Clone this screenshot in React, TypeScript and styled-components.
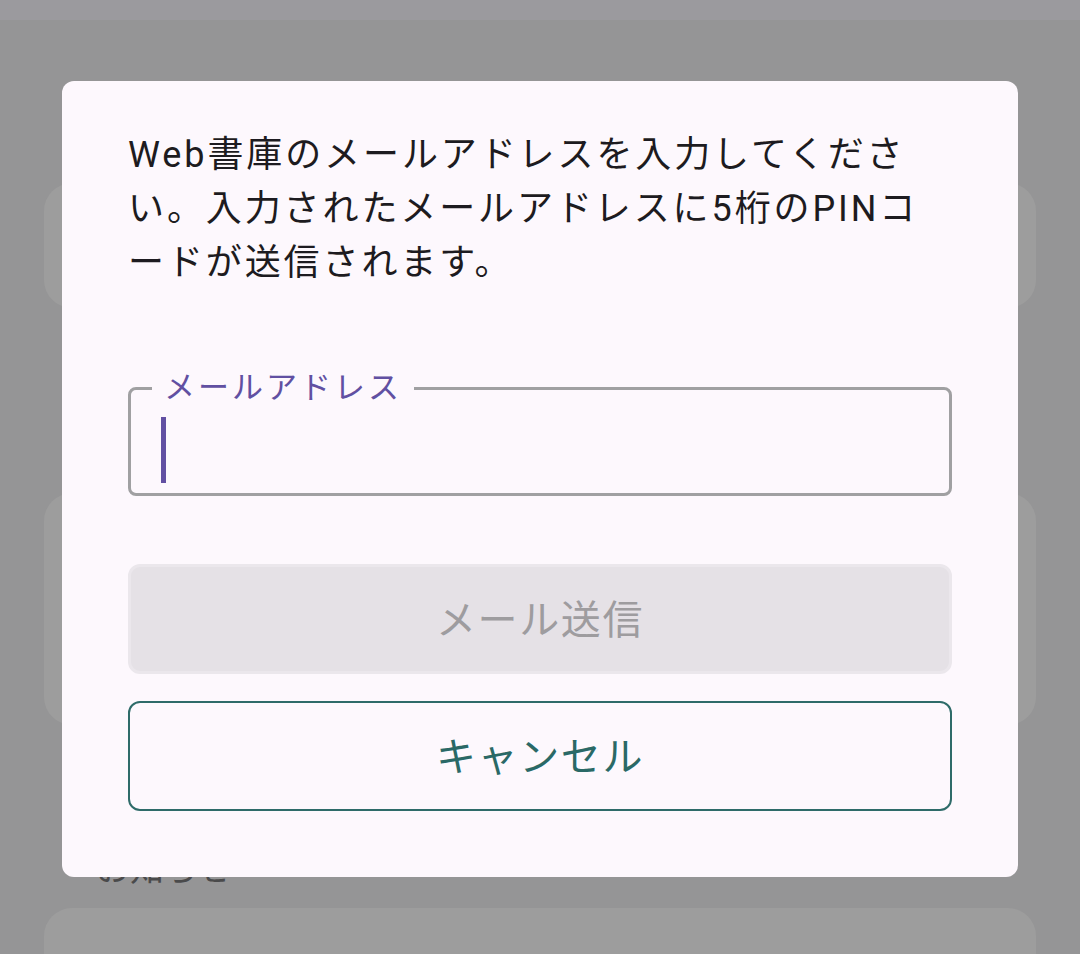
import React from "react";
import styled, { createGlobalStyle } from "styled-components";

const GlobalStyle = createGlobalStyle`
  html, body {
    margin: 0;
    padding: 0;
    height: 954px;
    overflow: hidden;
    background: #959596;
    font-family: Roboto, "Noto Sans CJK JP", sans-serif;
  }
  #root { height: 954px; }
`;

const Screen = styled.div`
  position: relative;
  width: 1080px;
  height: 954px;
  overflow: hidden;
  background: #959596;
`;

const StatusBar = styled.div`
  height: 20px;
  background: #9b9a9e;
`;

const Content = styled.div`
  display: flex;
  flex-direction: column;
  padding: 0 44px;
`;

const Card = styled.div<{ $top: number; $height: number }>`
  margin-top: ${(p) => p.$top}px;
  height: ${(p) => p.$height}px;
  border-radius: 28px;
  background: #9d9d9d;
`;

const SectionTitle = styled.div`
  margin-top: 124px;
  padding-left: 52px;
  font-size: 34px;
  line-height: 40px;
  color: #4a4a4b;
`;

const Overlay = styled.div`
  position: absolute;
  inset: 0;
  display: flex;
  justify-content: center;
  align-items: flex-start;
  padding-top: 81px;
`;

const Dialog = styled.div`
  width: 956px;
  box-sizing: border-box;
  padding: 47px 66px 66px;
  border-radius: 12px;
  background: #fdf8fd;
  display: flex;
  flex-direction: column;
`;

const Message = styled.p`
  margin: 0;
  font-size: 36px;
  line-height: 54px;
  letter-spacing: 2.9px;
  color: #1d1b20;
  white-space: nowrap;
`;

const Field = styled.fieldset`
  margin: 81px 0 0;
  padding: 0;
  min-width: 0;
  border: 3px solid #a0a0a2;
  border-radius: 8px;
`;

const FieldLabel = styled.legend`
  margin-left: 21px;
  padding: 0 12px;
  font-size: 31px;
  line-height: 34px;
  letter-spacing: 3px;
  color: #6150a2;
`;

const FieldBody = styled.div`
  padding: 12px 30px 10px;
  display: flex;
  align-items: center;
`;

const Caret = styled.div`
  width: 5px;
  height: 66px;
  background: #6250a3;
`;

const Button = styled.button<{ $variant: "disabled" | "outlined"; $top: number }>`
  margin-top: ${(p) => p.$top}px;
  height: 110px;
  width: 100%;
  box-sizing: border-box;
  border-radius: 12px;
  font-family: Roboto, "Noto Sans CJK JP", sans-serif;
  font-size: 40px;
  letter-spacing: 1.6px;
  padding: 0 0 4px;
  cursor: pointer;
  ${(p) =>
    p.$variant === "disabled"
      ? `
    background: #e5e1e6;
    border: 3px solid #ebe7ec;
    color: #9e9c9f;
  `
      : `
    background: transparent;
    border: 2.5px solid #2e6b69;
    color: #2a6966;
  `}
`;

export default function App() {
  return (
    <>
      <GlobalStyle />
      <Screen>
        <StatusBar />
        <Content>
          <Card $top={163} $height={125} />
          <Card $top={185} $height={232} />
          <SectionTitle>お知らせ</SectionTitle>
          <Card $top={19} $height={200} />
        </Content>
        <Overlay>
          <Dialog>
            <Message>
              Web書庫のメールアドレスを入力してくださ
              <br />
              い。入力されたメールアドレスに5桁のPINコ
              <br />
              ードが送信されます。
            </Message>
            <Field>
              <FieldLabel>メールアドレス</FieldLabel>
              <FieldBody>
                <Caret />
              </FieldBody>
            </Field>
            <Button $variant="disabled" $top={68} disabled>
              メール送信
            </Button>
            <Button $variant="outlined" $top={27}>
              キャンセル
            </Button>
          </Dialog>
        </Overlay>
      </Screen>
    </>
  );
}
